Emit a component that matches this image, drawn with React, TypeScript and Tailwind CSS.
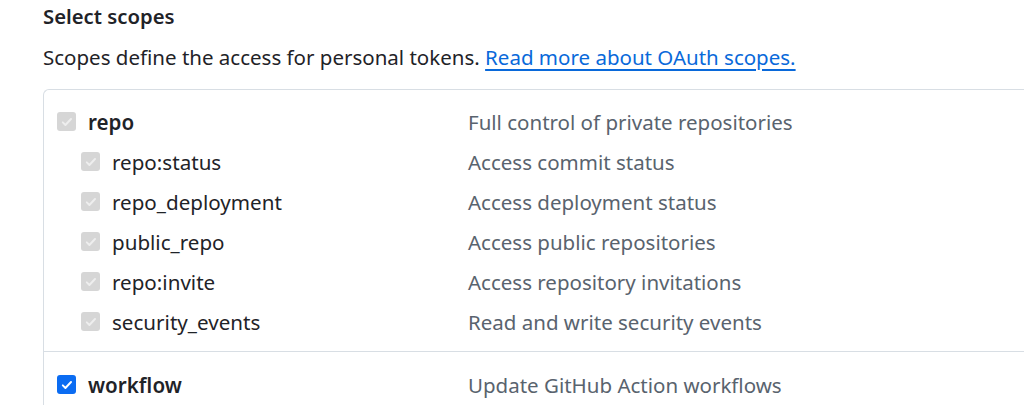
import React from 'react';

type Scope = { name: string; desc: string; sub?: boolean; disabled?: boolean };

const repoScopes: Scope[] = [
  { name: 'repo', desc: 'Full control of private repositories', disabled: true },
  { name: 'repo:status', desc: 'Access commit status', sub: true, disabled: true },
  { name: 'repo_deployment', desc: 'Access deployment status', sub: true, disabled: true },
  { name: 'public_repo', desc: 'Access public repositories', sub: true, disabled: true },
  { name: 'repo:invite', desc: 'Access repository invitations', sub: true, disabled: true },
  { name: 'security_events', desc: 'Read and write security events', sub: true, disabled: true },
];

function Check({ on }: { on: boolean }) {
  return (
    <span
      className={
        'flex size-[19px] shrink-0 items-center justify-center rounded-[3px] ' +
        (on ? 'bg-[#0b6cf2]' : 'bg-[#d6d6d6]')
      }
    >
      <svg viewBox="0 0 16 16" className="size-[14px]" fill="none">
        <path
          d="M3.2 8.4l3 3 6.4-6.8"
          stroke={on ? '#ffffff' : '#eeeeee'}
          strokeWidth="2.2"
          strokeLinecap="round"
          strokeLinejoin="round"
        />
      </svg>
    </span>
  );
}

function Row({ scope, top }: { scope: Scope; top?: boolean }) {
  return (
    <div className="flex h-[40px] items-center">
      <div className={'flex w-[411px] items-center ' + (scope.sub ? 'pl-[24px]' : '')}>
        <Check on={!scope.disabled} />
        <span className={'ml-[12px] text-[20.6px] text-[#1f2328] ' + (top ? 'font-semibold' : '')}>
          {scope.name}
        </span>
      </div>
      <span className="text-[20.5px] text-[#59636e]">{scope.desc}</span>
    </div>
  );
}

export default function App() {
  return (
    <div className="h-[405px] w-full overflow-hidden bg-white font-['Noto_Sans','Open_Sans',sans-serif] text-[#1f2328]">
      <div className="pl-[43px]">
        <h3 className="pt-[1px] text-[20.3px] font-semibold leading-[30px]">Select scopes</h3>
        <p className="mt-[11px] text-[20.5px] leading-[30px]">
          Scopes define the access for personal tokens.{' '}
          <a href="#" className="text-[#0969da] underline decoration-[1.5px] underline-offset-[4px]">
            Read more about OAuth scopes.
          </a>
        </p>
        <div className="mt-[17px] w-[1000px] rounded-l-[6px] border border-r-0 border-[#d8dee4] bg-white">
          <div className="pl-[13px] pt-[12px] pb-[9px]">
            {repoScopes.map((s, i) => (
              <Row key={s.name} scope={s} top={i === 0} />
            ))}
          </div>
          <div className="border-t border-[#d8dee4] pl-[13px] pt-[13px] pb-[12px]">
            <Row scope={{ name: 'workflow', desc: 'Update GitHub Action workflows' }} top />
          </div>
        </div>
      </div>
    </div>
  );
}
